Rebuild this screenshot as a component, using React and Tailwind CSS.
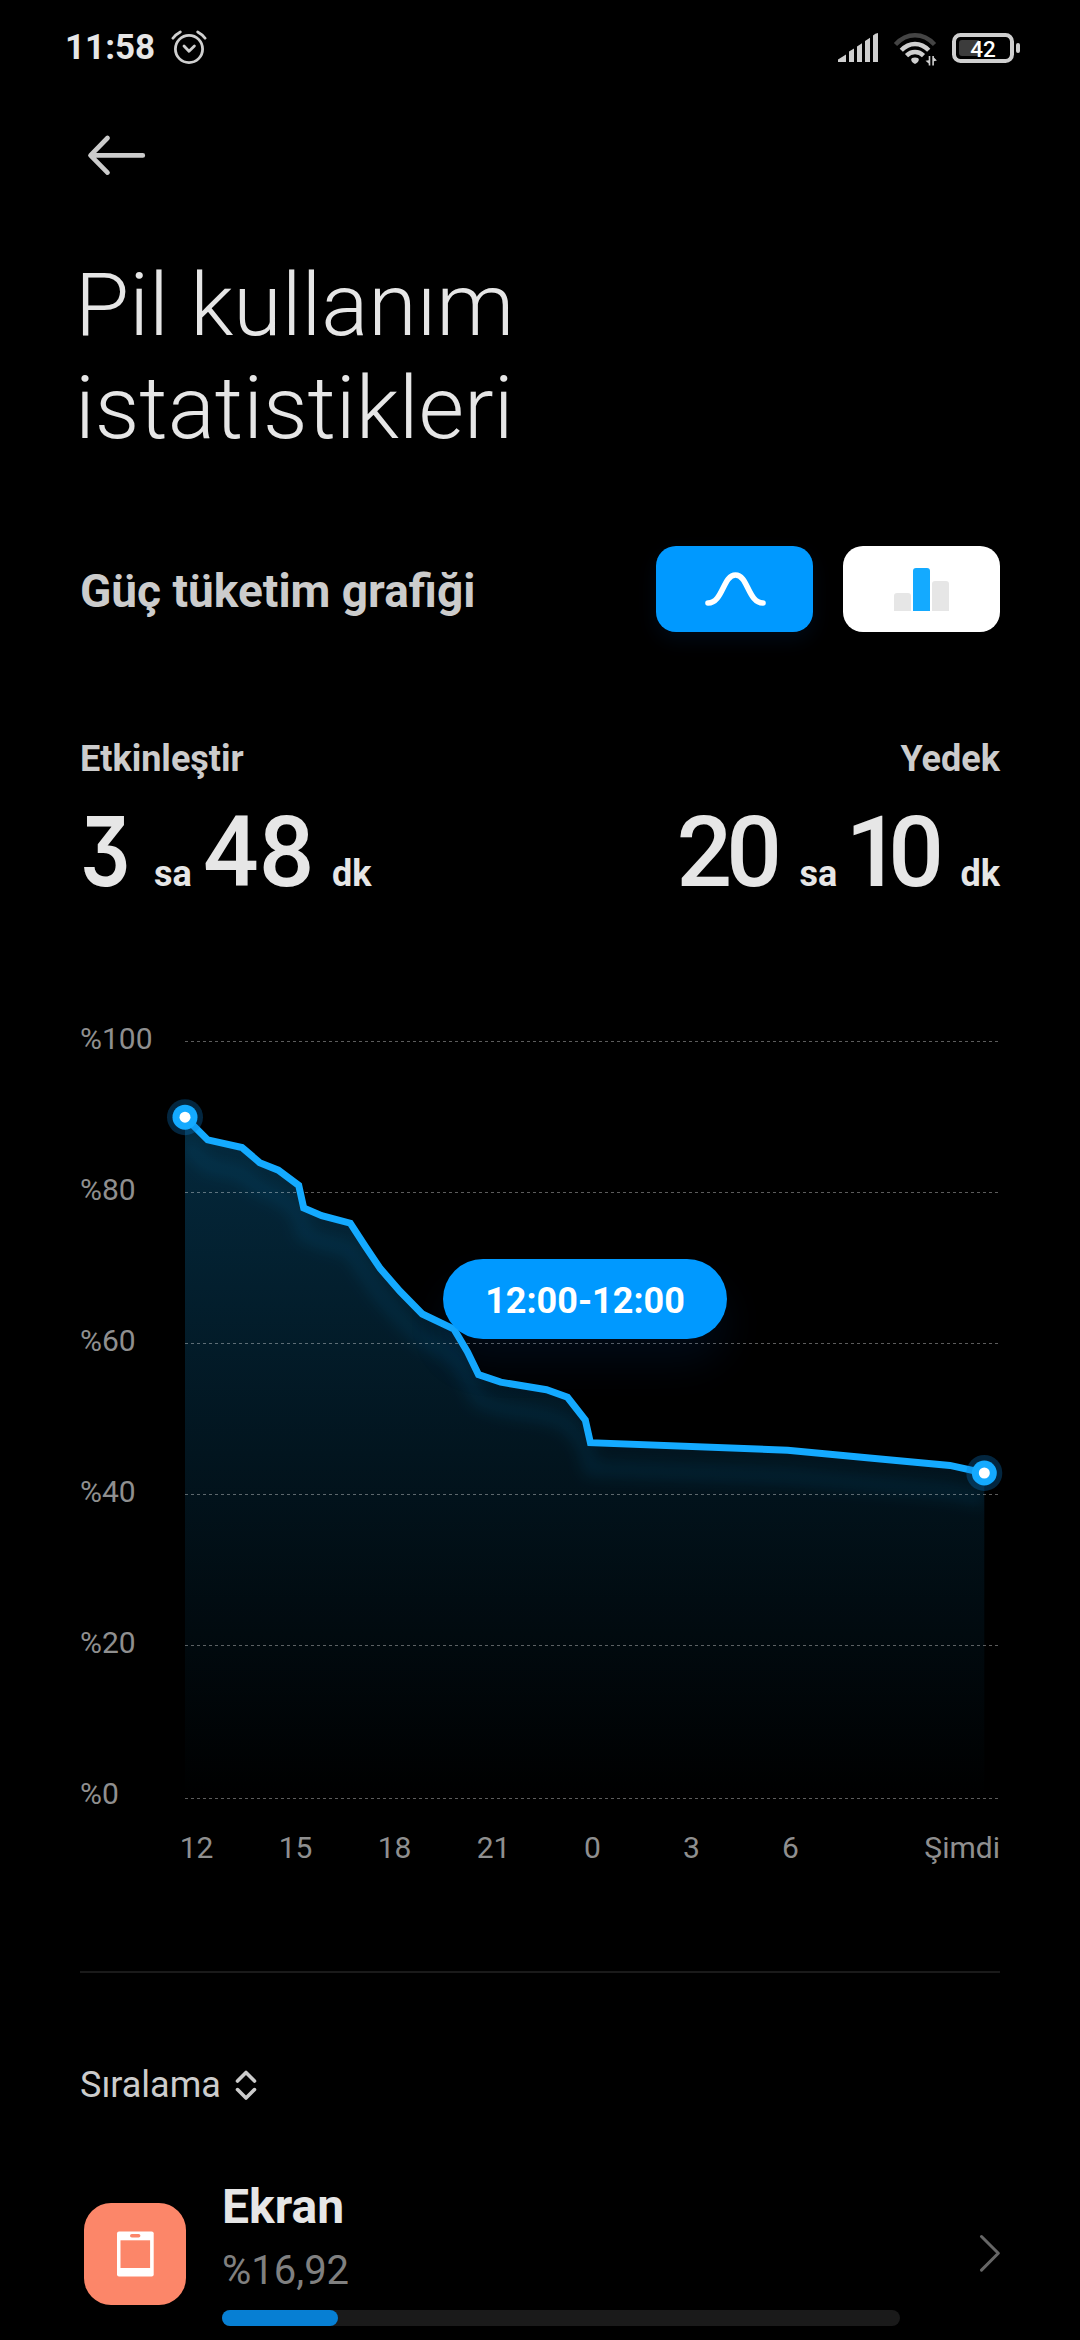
// BatteryStats.jsx
import React from 'react';

const yLabels = ['%100', '%80', '%60', '%40', '%20', '%0'];
const xLabels = ['12', '15', '18', '21', '0', '3', '6'];

// [x in px, battery level in %]
const levels = [
  [0, 90], [22.7, 87], [57, 86], [74.7, 84], [93.3, 83], [113.7, 81], [118.7, 78],
  [136.7, 77], [165.3, 76], [180, 73], [195.3, 70], [215, 67], [237.3, 64], [269, 62],
  [282.5, 59], [293.5, 56], [315.7, 55], [361.5, 54], [382.5, 53], [400.3, 50],
  [405.4, 47], [602.7, 46], [681.8, 45], [764.9, 44], [799.3, 43],
];

const CHART_HEIGHT = 757;
const toY = (level) => ((100 - level) * CHART_HEIGHT) / 100;
const linePoints = levels.map(([x, level]) => `${x},${toY(level)}`).join(' ');
const areaPoints = `0,${CHART_HEIGHT} ${linePoints} 799.3,${CHART_HEIGHT}`;
const gridLines = [0, 151, 302, 453, 604, 757];

const StatusBar = () => (
  <div className="h-[95px] shrink-0 flex items-center justify-between pl-[65px] pr-[59px]">
    <div className="flex items-center">
      <span className="text-[35px] leading-10 font-bold text-[#e6e6e6]">11:58</span>
      <svg className="ml-4 w-9 h-9" viewBox="171 30 36 36" fill="none" stroke="#cfcfcf" strokeWidth="2.8" strokeLinecap="round" strokeLinejoin="round">
        <circle cx="189" cy="49" r="13.6" />
        <path d="M172.9 38.2Q175.6 34.4 180.3 31.9M197.7 31.9Q202.4 34.4 205.1 38.2" />
        <path d="M184 46l5 5.2 5.4-5.2" />
      </svg>
    </div>
    <svg className="w-[184px] h-10" viewBox="837 27 184 40">
      <g fill="#cfcfcf">
        <path d="M838 61v-2.4l8-5.2V61zM849 61V50.6l5-3.2V61zM857 61V45.4l5-3.2V61zM865 61V40l5-3.2V61zM873 61V34.6q2.2-2.5 5-2.6V61z" />
        <path d="M915 63q-3.8-2-3.8-4.2a3.8 2.4 0 0 1 7.6 0Q918.8 61 915 63z" />
        <path d="M930.3 55v9.5h-1.6v-2l-3.2-2.7 3.2-.6V55zM932.3 64.5V55h1.6v1.6l3 3-3 .6v4.3z" />
        <rect x="1016" y="42" width="4" height="10" rx="2" />
      </g>
      <g fill="none" strokeWidth="4.4">
        <path stroke="#444" d="M895.5 43.5Q904 34.3 915 34.3T934.5 43.5" />
        <path stroke="#cfcfcf" d="M901.3 49.3Q907.2 43 915 43T928.7 49.3" />
        <path stroke="#cfcfcf" d="M906.5 54.6Q910 51 915 51T923.5 54.6" />
      </g>
      <rect x="954" y="34" width="58" height="26" rx="6.5" fill="none" stroke="#cfcfcf" strokeWidth="4" />
      <path fill="#3c3c3c" d="M962 39h17v16h-17q-3 0-3-3v-10q0-3 3-3z" />
      <text x="983" y="56.2" textAnchor="middle" fill="#fff" className="font-[Roboto] text-[22.5px] font-medium">42</text>
    </svg>
  </div>
);

const Duration = ({ hours, minutes, right }) => (
  <div className="flex items-baseline h-[98px] text-[98px] leading-[98px] font-medium text-[#e6e6e6]">
    {right ? (
      <>
        <span className="w-[124px] pl-px tracking-[-6px]">{hours}</span>
        <span className="w-[45px] text-4xl font-bold">sa</span>
        <span className="w-[116px] pl-px tracking-[-13px]">{minutes}</span>
      </>
    ) : (
      <>
        <span className="w-[74px]">
          <span className="inline-block origin-left scale-x-[0.82] font-[Inter] text-[96px] leading-[80px] font-semibold [font-feature-settings:'cv09']">{hours}</span>
        </span>
        <span className="w-[49px] text-4xl font-bold">sa</span>
        <span className="w-[129px]">{minutes}</span>
      </>
    )}
    <span className="text-4xl font-bold">dk</span>
  </div>
);

const Dot = ({ x, y }) => (
  <g>
    <circle cx={x} cy={y} r="18" fill="#0a7fd0" fillOpacity="0.3" />
    <circle cx={x} cy={y} r="12.5" fill="#14aaff" />
    <circle cx={x} cy={y} r="5.5" fill="#fff" />
  </g>
);

const Chart = () => (
  <div className="relative mt-[116px]">
    <div className="flex h-[809px]">
      <div className="w-[105px] shrink-0 text-[30px] leading-[42px] text-[#8f8f8f]">
        {yLabels.map((label) => (
          <div key={label} className="h-[151px]">{label}</div>
        ))}
      </div>
      <svg className="mt-[23px] w-[815px] h-[760px] overflow-visible" viewBox="0 -0.5 815 760">
        <defs>
          <linearGradient id="area" gradientUnits="userSpaceOnUse" x1="0" y1="76" x2="0" y2="757">
            <stop offset="0" stopColor="#10a5f5" stopOpacity="0.25" />
            <stop offset="1" stopColor="#10a5f5" stopOpacity="0" />
          </linearGradient>
          <clipPath id="areaClip">
            <polygon points={areaPoints} />
          </clipPath>
          <filter id="glow" x="-10%" y="-10%" width="120%" height="130%">
            <feGaussianBlur stdDeviation="7.5" />
          </filter>
        </defs>
        <polygon points={areaPoints} fill="url(#area)" />
        <g clipPath="url(#areaClip)">
          <polyline points={linePoints} transform="translate(0 26)" fill="none" stroke="#14aaff" strokeWidth="13" strokeOpacity="0.1" filter="url(#glow)" />
        </g>
        {gridLines.map((y) => (
          <line key={y} x1="0" x2="813" y1={y} y2={y} stroke="#fff" strokeOpacity="0.36" strokeDasharray="3 3" />
        ))}
        <polyline points={linePoints} fill="none" stroke="#14aaff" strokeWidth="7" strokeLinejoin="miter" />
        <Dot x={0} y={toY(90)} />
        <Dot x={799.3} y={toY(43)} />
      </svg>
    </div>
    <div className="flex items-center text-[30px] leading-[42px] text-[#8f8f8f] pl-[67px]">
      {xLabels.map((label) => (
        <span key={label} className="w-[99px] text-center">{label}</span>
      ))}
      <span className="ml-auto">Şimdi</span>
    </div>
    <div className="absolute left-[363px] top-[241px] w-[284px] h-20 rounded-full bg-[#0099ff] shadow-[0_24px_40px_rgba(0,100,220,0.1)] flex items-center justify-center pt-1 text-4xl font-bold text-white">
      12:00-12:00
    </div>
  </div>
);

const App = () => (
  <div className="w-[1080px] h-[2340px] overflow-hidden bg-black flex flex-col font-[Roboto,sans-serif]">
    <StatusBar />
    <div className="h-[120px] shrink-0 flex items-center pl-[86px]">
      <svg className="w-16 h-11" viewBox="86 133 64 44" fill="none" stroke="#cccccc" strokeWidth="4.7" strokeLinecap="round" strokeLinejoin="round">
        <path d="M107.5 138L90.5 155.4l17 17.2M91 155.4h51.8" />
      </svg>
    </div>
    <main className="px-20">
      <h1 className="mt-[38px] -ml-[5px] text-[88px] leading-[103px] font-light text-[#e6e6e6]">
        Pil kullanım
        <br />
        istatistikleri
      </h1>

      <div className="mt-[87px] h-[86px] flex items-center">
        <h2 className="pt-1 text-[46px] font-bold text-[#cccccc]">Güç tüketim grafiği</h2>
        <button className="ml-auto w-[157px] h-[86px] rounded-[20px] bg-[#0099ff] flex items-center justify-center shadow-[0_8px_20px_rgba(0,100,220,0.1)]">
          <svg className="w-16 h-10" viewBox="0 0 64 40" fill="none" stroke="#fff" strokeWidth="5.6" strokeLinecap="round">
            <path d="M5 34C20 34 20 6 32.5 6S45 34 60 34" />
          </svg>
        </button>
        <button className="ml-[30px] w-[157px] h-[86px] rounded-[20px] bg-white flex items-center justify-center">
          <svg className="w-14 h-11" viewBox="0 0 56 44">
            <path fill="#e6e6e6" d="M0 44V29q0-3 3-3h11q3 0 3 3v15z" />
            <path fill="#14aaff" d="M19 44V4q0-3 3-3h11q3 0 3 3v40z" />
            <path fill="#e6e6e6" d="M38 44V17q0-3 3-3h11q3 0 3 3v27z" />
          </svg>
        </button>
      </div>

      <div className="mt-[106px] flex justify-between text-4xl leading-[42px] font-bold text-[#cccccc]">
        <span>Etkinleştir</span>
        <span>Yedek</span>
      </div>
      <div className="mt-6 flex justify-between">
        <Duration hours="3" minutes="48" />
        <Duration hours="20" minutes="10" right />
      </div>

      <Chart />

      <div className="mt-[102px] h-0.5 bg-[#1a1a1a]" />

      <div className="mt-[91px] flex items-center text-4xl leading-[42px] text-[#cccccc]">
        Sıralama
        <svg className="ml-[13px] w-6 h-8" viewBox="234 2067 24 32" fill="none" stroke="#cccccc" strokeWidth="3.6" strokeLinecap="round" strokeLinejoin="round">
          <path d="M237.5 2079l8.5-8.500 8.500 8.500M237.500 2087.600l8.500 8.500 8.500-8.500" />
        </svg>
      </div>

      <div className="mt-[73px] flex">
        <div className="mt-6 ml-1 w-[102px] h-[102px] rounded-[27px] bg-[#fc8669]">
          <svg className="w-full h-full" viewBox="84 2203 102 102">
            <rect x="117" y="2231.5" width="36.7" height="45" rx="2" fill="#fff" />
            <rect x="120.5" y="2240.3" width="29.6" height="27.7" fill="#fc8669" />
            <rect x="130" y="2234" width="10.4" height="3.6" rx="1.8" fill="#fc8669" />
          </svg>
        </div>
        <div className="ml-9 w-[678px]">
          <div className="text-[48px] leading-[56px] font-bold text-[#e6e6e6]">Ekran</div>
          <div className="mt-3 text-[40px] leading-[48px] text-[#808080]">%16,92</div>
          <div className="mt-[15px] h-4 rounded-full bg-[#1a1a1a]">
            <div className="h-full w-[116px] rounded-full bg-[#077fd3]" />
          </div>
        </div>
        <svg className="mt-[54px] ml-[78px] w-[22px] h-10" viewBox="978 2233 22 40" fill="none" stroke="#666" strokeWidth="3" strokeLinecap="round" strokeLinejoin="round">
          <path d="M981.5 2236.5l16.8 16.8-16.8 16.8" />
        </svg>
      </div>
    </main>
  </div>
);

export default App;
